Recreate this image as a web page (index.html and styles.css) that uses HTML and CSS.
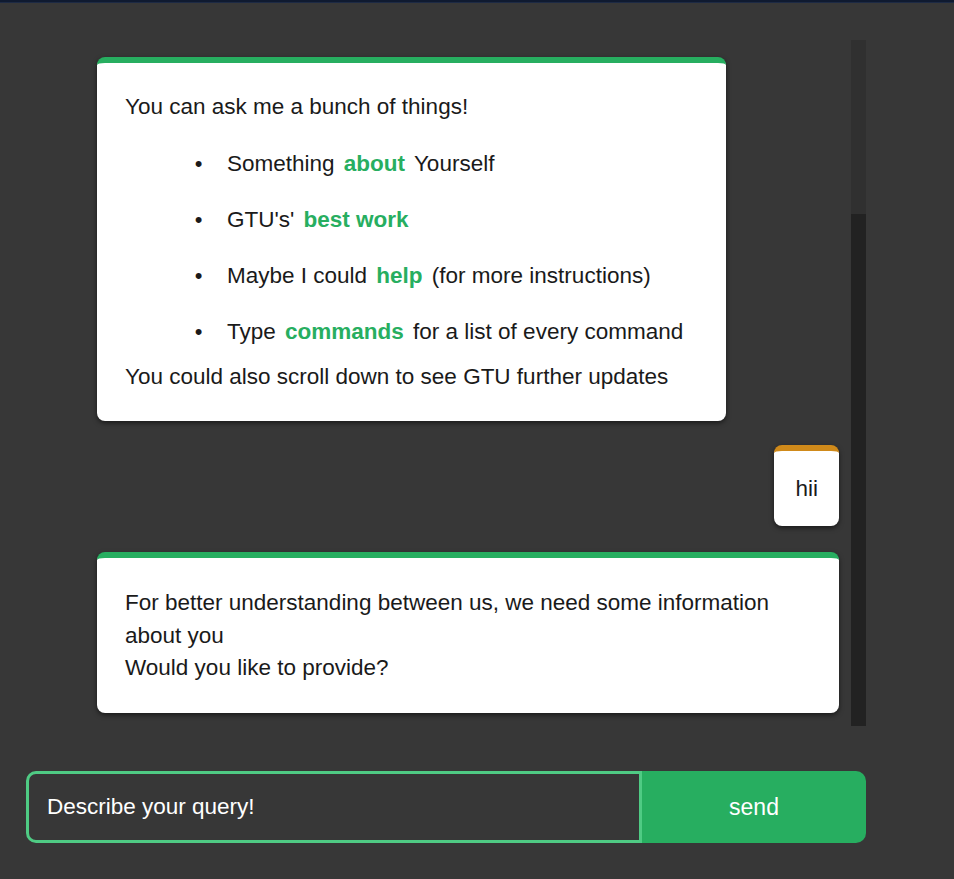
FILE: index.html
```html
<!DOCTYPE html>
<html lang="en">
<head>
<meta charset="utf-8">
<title>GTU Chat</title>
<link rel="stylesheet" href="styles.css">
</head>
<body>
<div class="topline"></div>
<main class="wrap">
  <section class="chat">
    <div class="messages">
      <div class="msg bot intro">
        <p class="line">You can ask me a bunch of things!</p>
        <ul class="list">
          <li>Something <b class="kw">about</b> Yourself</li>
          <li>GTU's' <b class="kw">best work</b></li>
          <li>Maybe I could <b class="kw">help</b> (for more instructions)</li>
          <li>Type <b class="kw">commands</b> for a list of every command</li>
        </ul>
        <p class="line tail">You could also scroll down to see GTU further updates</p>
      </div>
      <div class="msg user">hii</div>
      <div class="msg bot wide">
        <p class="line">For better understanding between us, we need some information about you<br>Would you like to provide?</p>
      </div>
    </div>
    <div class="scrollbar"><div class="thumb"></div></div>
  </section>
  <form class="composer">
    <input class="query" type="text" placeholder="Describe your query!" autofocus>
    <button class="send" type="button">send</button>
  </form>
</main>
</body>
</html>
```
FILE: styles.css
```css
* { box-sizing: border-box; }
html, body { margin: 0; padding: 0; }
body {
  background: #373737;
  font-family: Arial, "Liberation Sans", Helvetica, sans-serif;
  height: 879px;
  overflow: hidden;
}
.topline {
  height: 3px;
  background: #0f1a30;
  border-bottom: 1px solid #1d2a44;
}
.wrap {
  margin: 37px 0 0 26px;
  width: 840px;
}
.chat {
  display: flex;
  height: 686px;
}
.messages {
  flex: 1;
  display: flex;
  flex-direction: column;
  align-items: flex-start;
  padding: 17px 12px 13px 71px;
}
.msg {
  background: #fff;
  color: #1a1a1a;
  font-family: Arial, "Liberation Sans", Helvetica, sans-serif;
  font-size: 22.5px;
  line-height: 32px;
  border-radius: 8px;
  border-top: 6px solid #27ae60;
  box-shadow: 0 2px 5px rgba(0,0,0,0.55);
}
.intro {
  width: 629px;
  padding: 28px 28px 28px;
}
.line { margin: 0; }
.list {
  margin: 13px 0 1px;
  padding-left: 102px;
  list-style: disc;
}
.list li { padding: 12px 0; }
.list li::marker {
  content: "\2022\00a0\00a0\00a0\00a0";
  font-size: 22px;
}
.kw {
  color: #27ae60;
  font-weight: bold;
  margin: 0 3px;
}
.user {
  align-self: flex-end;
  margin-top: 24px;
  border-top-color: #d08a1a;
  padding: 22px 21px 21px;
}
.wide {
  align-self: stretch;
  margin-top: 26px;
  padding: 29px 28px 28px;
  line-height: 32.5px;
}
.scrollbar {
  width: 15px;
  background: #222222;
}
.thumb {
  height: 174px;
  background: #303030;
}
.composer {
  display: flex;
  margin-top: 45px;
  height: 72px;
}
.query {
  width: 616px;
  height: 72px;
  background: transparent;
  border: 3px solid #4fcb84;
  border-radius: 10px 0 0 10px;
  padding: 0 18px;
  font-family: Arial, "Liberation Sans", Helvetica, sans-serif;
  font-size: 22.5px;
  color: #fff;
  outline: none;
}
.query::placeholder { color: #fff; opacity: 1; }
.send {
  width: 224px;
  height: 72px;
  border: none;
  border-radius: 0 10px 10px 0;
  background: #27ae60;
  color: #fff;
  font-family: Arial, "Liberation Sans", Helvetica, sans-serif;
  font-size: 23px;
  padding: 0;
}
```
